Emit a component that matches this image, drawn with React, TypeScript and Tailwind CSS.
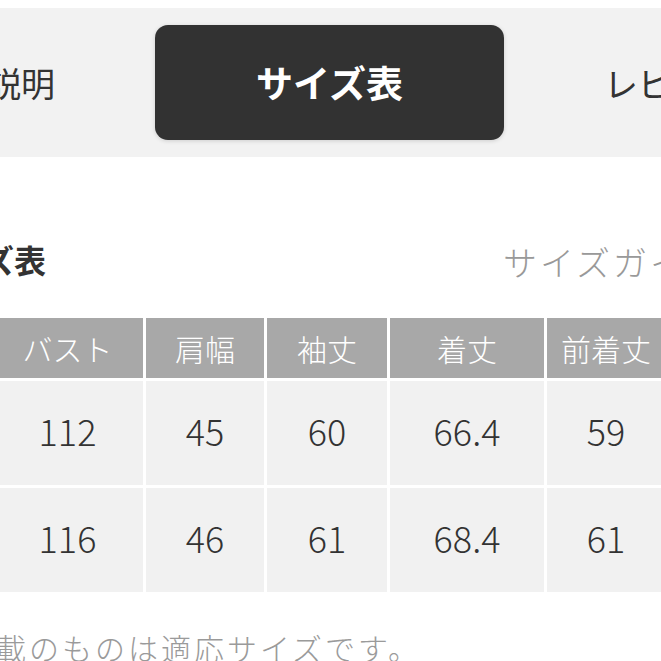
import React from "react";

const font = { fontFamily: '"Noto Sans CJK JP", "Noto Sans", sans-serif' };

const cols = [
  { w: "w-[151px]", head: "バスト", r1: "112", r2: "116" },
  { w: "w-[118px]", head: "肩幅", r1: "45", r2: "46" },
  { w: "w-[120px]", head: "袖丈", r1: "60", r2: "61" },
  { w: "w-[154px]", head: "着丈", r1: "66.4", r2: "68.4" },
  { w: "w-[118px]", head: "前着丈", r1: "59", r2: "61" },
  { w: "w-[118px]", head: "裾幅", r1: "58", r2: "60" },
];

export default function App() {
  return (
    <div
      className="w-[661px] h-[661px] overflow-hidden bg-white text-[#333]"
      style={font}
    >
      <div className="pt-[8px]">
        <div className="h-[149px] bg-[#f2f2f2] flex items-center">
          <div className="flex items-center ml-[-181px] shrink-0">
            <div className="w-[336px] shrink-0 text-center text-[34px] leading-none text-[#333]">
              商品説明
            </div>
            <div className="w-[349px] h-[115px] shrink-0 rounded-[13px] bg-[#323232] shadow-[0_1px_4px_rgba(0,0,0,0.15)] flex items-center justify-center text-white font-bold text-[37px] leading-none">
              サイズ表
            </div>
            <div className="w-[336px] shrink-0 text-center text-[34px] leading-none text-[#333]">
              レビュー
            </div>
          </div>
        </div>
      </div>

      <div className="mt-[82px] h-[40px] flex items-center justify-between ml-[-81px] w-[805px] whitespace-nowrap">
        <div className="text-[32px] font-bold leading-none text-[#333]">サイズ表</div>
        <div className="text-[34px] font-light leading-none tracking-[3px] text-[#999] pt-[6px]">
          サイズガイド
        </div>
      </div>

      <div className="mt-[39px] ml-[-8px] flex flex-col gap-[3px] w-[900px]">
        <div className="flex gap-[3px] h-[60px]">
          {cols.map((c) => (
            <div
              key={c.head}
              className={`${c.w} shrink-0 bg-[#a8a8a8] text-white text-[30px] font-light leading-none flex items-center justify-center`}
            >
              {c.head}
            </div>
          ))}
        </div>
        <div className="flex gap-[3px] h-[104px]">
          {cols.map((c) => (
            <div
              key={c.head}
              className={`${c.w} shrink-0 bg-[#f1f1f1] text-[#333] text-[36px] font-light leading-none flex items-center justify-center pb-[6px]`}
            >
              {c.r1}
            </div>
          ))}
        </div>
        <div className="flex gap-[3px] h-[104px]">
          {cols.map((c) => (
            <div
              key={c.head}
              className={`${c.w} shrink-0 bg-[#f1f1f1] text-[#333] text-[36px] font-light leading-none flex items-center justify-center pb-[6px]`}
            >
              {c.r2}
            </div>
          ))}
        </div>
      </div>

      <div className="mt-[35px] h-[40px] flex items-center ml-[-70px] whitespace-nowrap text-[30px] font-light leading-none tracking-[3px] text-[#9a9a9a]">
        ※記載のものは適応サイズです。
      </div>
    </div>
  );
}
